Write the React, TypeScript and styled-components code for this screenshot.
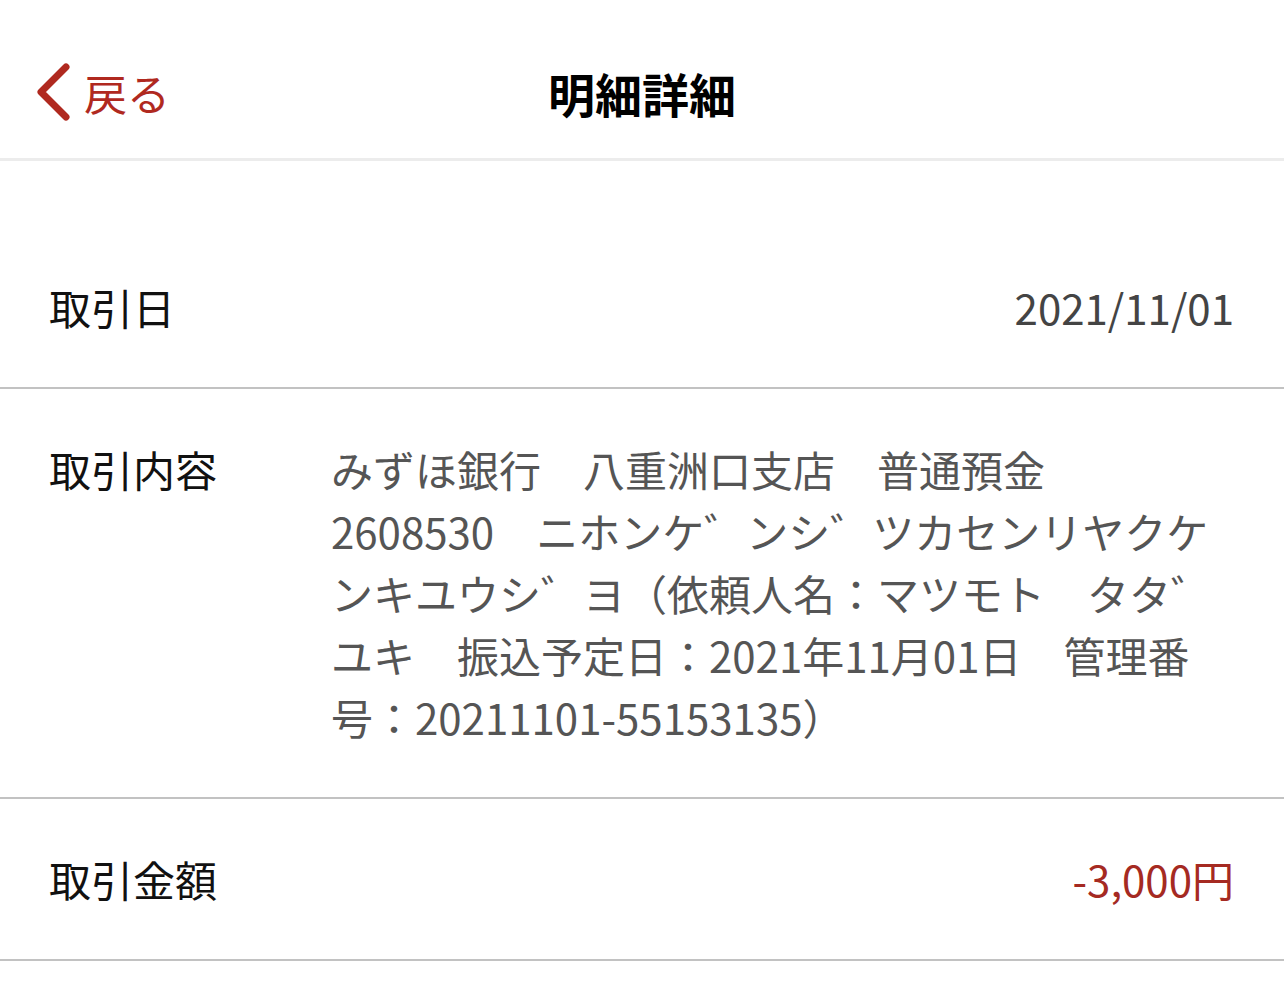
import React from "react";
import styled, { createGlobalStyle } from "styled-components";

const GlobalStyle = createGlobalStyle`
  html, body { margin: 0; padding: 0; background: #ffffff; }
  body { font-family: "Noto Sans CJK JP", "Noto Sans", sans-serif; }
  * { box-sizing: border-box; }
`;

const Page = styled.div`
  width: 1284px;
  min-height: 998px;
  background: #ffffff;
`;

const Header = styled.header`
  position: relative;
  height: 161px;
  padding-top: 26px;
  display: flex;
  align-items: center;
  justify-content: center;
  background: #ffffff;
  border-bottom: 3px solid #ececec;
`;

const BackButton = styled.button`
  position: absolute;
  left: 34px;
  top: calc(50% + 13px);
  transform: translateY(-50%);
  display: flex;
  align-items: center;
  gap: 10px;
  background: none;
  border: none;
  padding: 0;
  color: #b0291f;
  font-family: "Noto Sans CJK JP", sans-serif;
  font-size: 43px;
  line-height: 1;
  cursor: pointer;
`;

const Title = styled.h1`
  margin: 0;
  font-size: 47px;
  font-weight: 700;
  color: #000000;
  font-family: "Noto Sans CJK JP", sans-serif;
  letter-spacing: 0;
`;

const List = styled.section`
  padding-top: 66px;
`;

const Row = styled.div<{ $align?: "start" | "center" }>`
  display: grid;
  grid-template-columns: 282px 1fr;
  align-items: ${(p) => (p.$align === "start" ? "start" : "center")};
  padding: 49px 50px 49px 49px;
  border-bottom: 2px solid #c2c2c2;
  font-size: 42px;
  line-height: 62px;
`;

const Label = styled.div`
  color: #111111;
`;

const Value = styled.div<{ $tone?: "plain" | "desc" | "amount"; $right?: boolean }>`
  text-align: ${(p) => (p.$right ? "right" : "left")};
  color: ${(p) =>
    p.$tone === "amount" ? "#a52a22" : p.$tone === "desc" ? "#555555" : "#444444"};
  word-break: normal;
  overflow-wrap: break-word;
  line-break: strict;
`;

const Chevron = () => (
  <svg width="40" height="58" viewBox="0 0 40 58" fill="none">
    <path
      d="M32 4 L7 29 L32 54"
      stroke="#b0291f"
      strokeWidth="7"
      strokeLinecap="round"
      strokeLinejoin="round"
    />
  </svg>
);

export default function App() {
  return (
    <Page>
      <GlobalStyle />
      <Header>
        <BackButton>
          <Chevron />
          <span>戻る</span>
        </BackButton>
        <Title>明細詳細</Title>
      </Header>
      <List>
        <Row>
          <Label>取引日</Label>
          <Value $right>2021/11/01</Value>
        </Row>
        <Row $align="start">
          <Label>取引内容</Label>
          <Value $tone="desc">
            みずほ銀行　八重洲口支店　普通預金　2608530　ニホンケ゛ンシ゛ツカセンリヤクケンキユウシ゛ヨ（依頼人名：マツモト　タタ゛ユキ　振込予定日：2021年11月01日　管理番号：20211101-55153135）
          </Value>
        </Row>
        <Row>
          <Label>取引金額</Label>
          <Value $right $tone="amount">-3,000円</Value>
        </Row>
      </List>
    </Page>
  );
}
